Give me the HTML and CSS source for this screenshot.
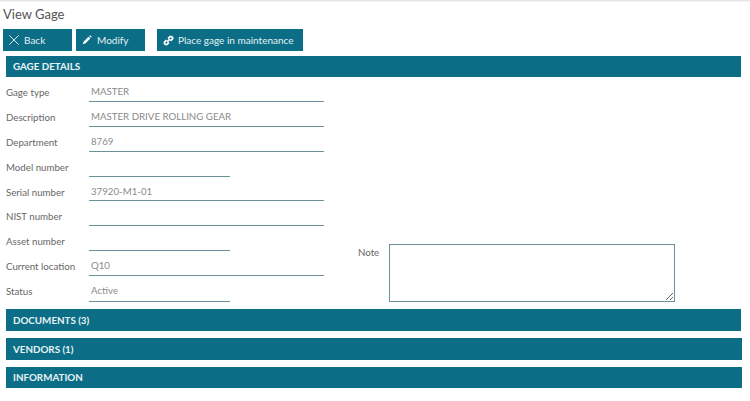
FILE: index.html
```html
<!DOCTYPE html>
<html lang="en">
<head>
    <meta charset="UTF-8">
    <meta name="viewport" content="width=device-width, initial-scale=1.0">
    <title>View Gage</title>
    <link rel="stylesheet" href="styles.css">
</head>
<body>
    <h1 class="page-title">View Gage</h1>
    <div class="toolbar">
        <button class="btn btn-back">
            <svg class="icon" viewBox="0 0 12 12"><path d="M0.3 0.3L11.7 11.7M11.7 0.3L0.3 11.7" fill="none" stroke="#fff" stroke-width="1"/></svg>
            Back
        </button>
        <button class="btn btn-modify">
            <svg class="icon" viewBox="0 0 12 12"><path d="M1 11L1.8 8L7.8 2L10 4.2L4 10.2Z M8.6 1.2L9.4 0.6Q9.9 0.3 10.3 0.7L11.3 1.7Q11.7 2.1 11.3 2.6L10.8 3.4Z" fill="#fff"/></svg>
            Modify
        </button>
        <button class="btn btn-maintenance">
            <svg class="icon" viewBox="0 0 12 12"><g fill="none" stroke="#fff" stroke-width="2"><path d="M5.6 3.8L7.4 2Q8.4 1 9.6 2L10 2.4Q11 3.5 10 4.6L8.2 6.4"/><path d="M6.4 8.2L4.6 10Q3.5 11 2.4 10L2 9.6Q1 8.5 2 7.4L3.8 5.6"/><path d="M4.5 7.5L7.5 4.5"/></g></svg>
            Place gage in maintenance
        </button>
    </div>

    <section class="panel">
        <h2 class="panel-header">GAGE DETAILS</h2>
        <div class="details">
            <div class="fields">
                <div class="field"><label>Gage type</label><div class="value">MASTER</div></div>
                <div class="field"><label>Description</label><div class="value">MASTER DRIVE ROLLING GEAR</div></div>
                <div class="field"><label>Department</label><div class="value">8769</div></div>
                <div class="field"><label>Model number</label><div class="value short"></div></div>
                <div class="field"><label>Serial number</label><div class="value">37920-M1-01</div></div>
                <div class="field"><label>NIST number</label><div class="value"></div></div>
                <div class="field"><label>Asset number</label><div class="value short"></div></div>
                <div class="field"><label>Current location</label><div class="value">Q10</div></div>
                <div class="field"><label>Status</label><div class="value short">Active</div></div>
            </div>
            <div class="note">
                <label>Note</label>
                <textarea class="note-input"></textarea>
            </div>
        </div>
    </section>

    <section class="panel panel-closed"><h2 class="panel-header">DOCUMENTS (3)</h2></section>
    <section class="panel panel-closed wide"><h2 class="panel-header">VENDORS (1)</h2></section>
    <section class="panel panel-closed wide"><h2 class="panel-header">INFORMATION</h2></section>
</body>
</html>
```

FILE: styles.css
```css
body {
    font-family: Lato, "Open Sans", sans-serif;
    background-color: #fff;
    color: #666;
    margin: 0;
    padding: 0 9px 0 6px;
    height: 401px;
    box-sizing: border-box;
    overflow: hidden;
    box-shadow: inset 0 3px 2px -2px #ddd;
}

.page-title {
    font-size: 13px;
    font-weight: 400;
    color: #555;
    line-height: 16px;
    margin: 0 0 0 -3px;
    padding-top: 6px;
}

.toolbar {
    display: flex;
    margin: 7px 0 5px -3px;
}

.btn {
    display: flex;
    align-items: center;
    height: 22px;
    padding: 0 0 0 6px;
    border: none;
    background-color: #0c6e86;
    color: #e4f1f4;
    font-family: inherit;
    font-size: 10px;
    white-space: nowrap;
}

.icon {
    width: 10px;
    height: 10px;
    margin-right: 5px;
    flex: none;
}

.btn-back {
    width: 69px;
    margin-right: 4px;
}

.btn-modify {
    width: 69px;
    margin-right: 12px;
}

.btn-maintenance {
    width: 146px;
}

.btn-maintenance .icon {
    width: 11px;
    height: 11px;
    margin-right: 4px;
}

.panel-header {
    background-color: #0c6e86;
    color: #e8f3f5;
    font-size: 9.8px;
    font-weight: 700;
    line-height: 21px;
    margin: 0;
    padding-left: 7px;
}

.details {
    display: flex;
    height: 232px;
    box-sizing: border-box;
    padding-bottom: 7px;
}

.fields {
    width: 318px;
}

.field {
    display: flex;
    height: 24.88px;
}

.field:last-child {
    height: 25.9px;
}

.field label {
    width: 83px;
    flex: none;
    font-size: 9.7px;
    padding-top: 9px;
    color: #666;
}

.value {
    width: 235px;
    box-sizing: border-box;
    height: 100%;
    padding: 8px 0 0 2px;
    border-bottom: 1px solid #6d919c;
    font-size: 9.7px;
    color: #8a8a8a;
}

.value.short {
    width: 141px;
}

.note {
    display: flex;
    align-self: flex-end;
    margin-left: 34px;
}

.note label {
    width: 31px;
    font-size: 9.7px;
    padding-top: 2px;
}

.note-input {
    display: block;
    width: 286px;
    height: 58px;
    box-sizing: border-box;
    margin: 0;
    border: 1px solid #6d8f99;
    border-radius: 0;
    outline: none;
}

.panel-closed {
    margin-bottom: 7px;
}

.panel-closed .panel-header {
    line-height: 22px;
}

.panel-closed:last-child .panel-header {
    line-height: 21px;
}

.panel-closed.wide {
    margin-right: -1px;
}
```
